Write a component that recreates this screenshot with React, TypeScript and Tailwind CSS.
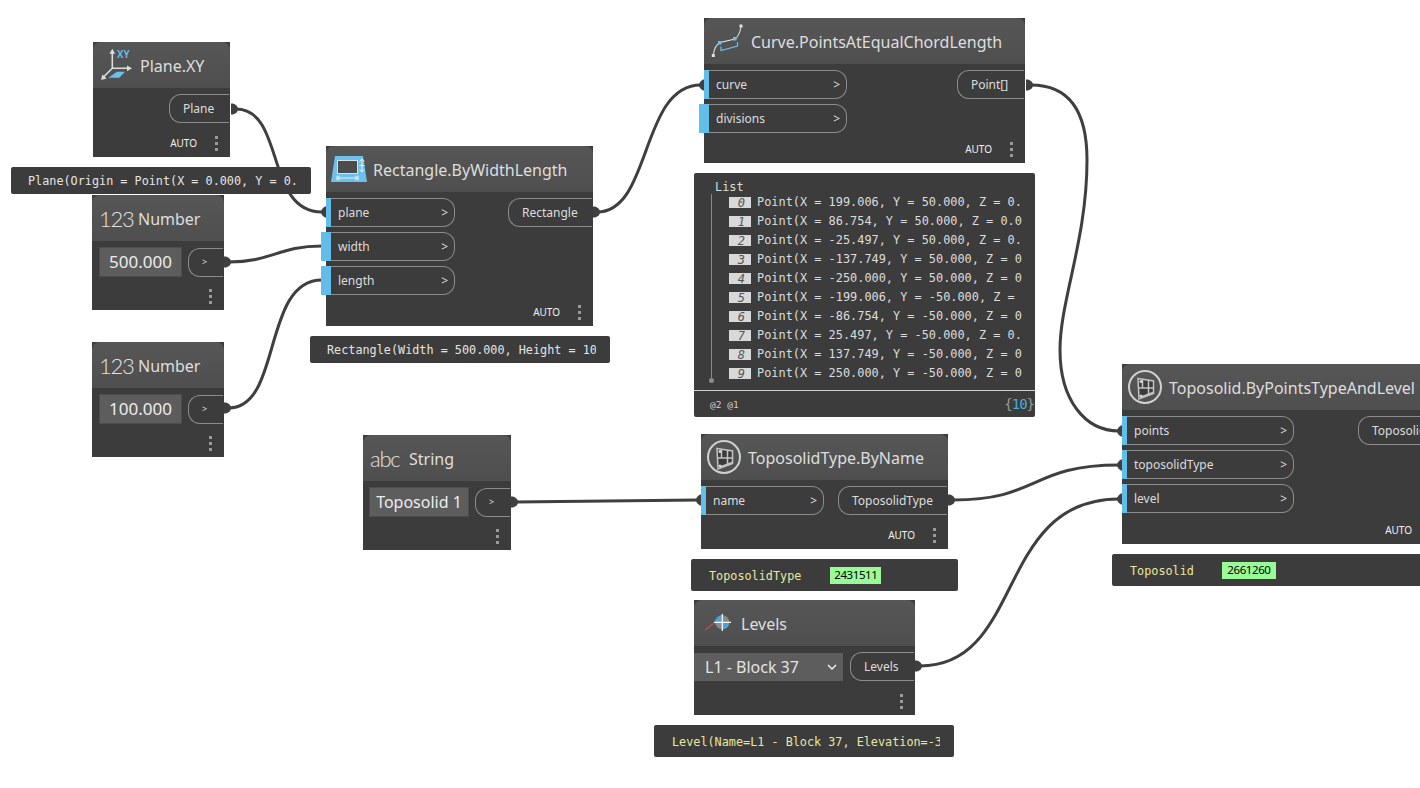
import { ReactNode } from "react";

const points = [
  "Point(X = 199.006, Y = 50.000, Z = 0.000)",
  "Point(X = 86.754, Y = 50.000, Z = 0.000)",
  "Point(X = -25.497, Y = 50.000, Z = 0.000)",
  "Point(X = -137.749, Y = 50.000, Z = 0.000)",
  "Point(X = -250.000, Y = 50.000, Z = 0.000)",
  "Point(X = -199.006, Y = -50.000, Z = 0.000)",
  "Point(X = -86.754, Y = -50.000, Z = 0.000)",
  "Point(X = 25.497, Y = -50.000, Z = 0.000)",
  "Point(X = 137.749, Y = -50.000, Z = 0.000)",
  "Point(X = 250.000, Y = -50.000, Z = 0.000)",
];

const outPlugs = [
  [231, 109],
  [593, 212],
  [1026, 85],
  [224, 262],
  [224, 408],
  [511, 502],
  [948, 500],
  [915, 666],
];

const inPlugs = [
  [326, 212],
  [704, 85],
  [701, 500],
  [1122, 431],
  [1122, 465],
  [1122, 499],
];

function InPort({ name, width, loose }: { name: string; width: string; loose?: boolean }) {
  return (
    <div className={`flex h-[29px] items-center ${width}`}>
      <div className={`h-full shrink-0 bg-[#62bde8] ${loose ? "-ml-[5px] w-[10px]" : "w-[5px]"}`} />
      <div className="flex h-full flex-1 items-center justify-between rounded-r-[12px] border border-l-0 border-[#8c8c8c] pl-[7px] pr-[6px] text-[12px] text-[#dcdcdc]">
        <span>{name}</span>
        <span>&gt;</span>
      </div>
    </div>
  );
}

function OutPort({ name, width }: { name: string; width: string }) {
  return (
    <div className={`flex h-[29px] items-center overflow-hidden rounded-l-[12px] border border-r-0 border-[#8c8c8c] pl-[13px] text-[12px] whitespace-nowrap text-[#dcdcdc] ${width}`}>
      {name}
    </div>
  );
}

function SmallOut({ name, width, pad }: { name: string; width: string; pad: string }) {
  return (
    <div className={`flex h-[29px] shrink-0 items-center rounded-l-[12px] border border-r-0 border-[#8c8c8c] text-[#dcdcdc] ${width} ${pad}`}>
      {name}
    </div>
  );
}

function Dots() {
  return (
    <div className="flex flex-col gap-[3px]">
      <div className="h-[3px] w-[3px] bg-[#9a9a9a]" />
      <div className="h-[3px] w-[3px] bg-[#9a9a9a]" />
      <div className="h-[3px] w-[3px] bg-[#9a9a9a]" />
    </div>
  );
}

function Footer({ auto = true }: { auto?: boolean }) {
  return (
    <div className="mt-auto flex h-[28px] items-center justify-end gap-[18px] pr-[12px]">
      {auto && <span className="text-[10px] text-[#f0f0f0]">AUTO</span>}
      <Dots />
    </div>
  );
}

function Header({ icon, title }: { icon: ReactNode; title: string }) {
  return (
    <div className="flex h-[46px] shrink-0 items-center rounded-t-[8px] bg-gradient-to-b from-[#565656] to-[#4f4f4f] pl-[4px]">
      <div className="h-[40px] w-[40px] shrink-0">{icon}</div>
      <span className="pt-[2px] pl-[3px] text-[16px] whitespace-nowrap text-[#dedede]">{title}</span>
    </div>
  );
}

function TextIconHeader({ mark, title }: { mark: string; title: string }) {
  return (
    <div className="flex h-[46px] shrink-0 items-center rounded-t-[8px] bg-gradient-to-b from-[#565656] to-[#4f4f4f] pl-[7px]">
      <span className="w-[39px] shrink-0 font-['Lato',sans-serif] text-[22px] font-light tracking-[-1.2px] text-[#e2e2e2]">{mark}</span>
      <span className="pt-[2px] text-[16px] text-[#dedede]">{title}</span>
    </div>
  );
}

function Preview({ className, children }: { className: string; children: ReactNode }) {
  return (
    <div className={`absolute flex items-center rounded-[2px] bg-[#3c3c3c] font-['DejaVu_Sans_Mono',monospace] text-[11.8px] whitespace-nowrap ${className}`}>
      {children}
    </div>
  );
}

function PlaneIcon() {
  return (
    <svg viewBox="0 0 40 40" className="h-full w-full" fill="none">
      <path d="M11.3 32.7 20 26.7H28L22.3 32.7Z" fill="#6cc0ec" />
      <path d="M15.3 23.3V7M15.3 23.3H31M15.3 23.3 6 32.5" stroke="#dcdcdc" strokeWidth="1.6" />
      <path d="M15.3 3.8 12.4 8.8H18.2ZM35 23.3 30 20.4V26.2ZM4 35 9.6 33.6 5.4 29.4Z" fill="#dcdcdc" />
      <text x="20" y="13" fill="#6cc0ec" fontSize="10" fontWeight="600" fontFamily="Noto Sans">XY</text>
    </svg>
  );
}

function RectIcon() {
  return (
    <svg viewBox="0 0 40 40" className="h-full w-full" fill="none">
      <path d="M5 7H33L37 33H1Z" fill="#6cc0ec" />
      <rect x="7.5" y="11.5" width="20" height="13" fill="#4c4c4c" stroke="#e0e0e0" />
      <path d="M32 10V23M29.5 12.5 32 10 34.5 12.5M29.5 20.5 32 23 34.5 20.5M29.5 16.5H34.5" stroke="#f0f0f0" />
      <path d="M7 29H28M7 26.5V31.5M28 26.5V31.5M10 27 7 29 10 31M25 27 28 29 25 31" stroke="#f0f0f0" />
    </svg>
  );
}

function CurveIcon() {
  return (
    <svg viewBox="0 0 40 40" className="h-full w-full" fill="none">
      <path d="M33 6C32 12 31 15 27 18" stroke="#d0d0d0" strokeWidth="1.2" />
      <path d="M27 18 12 21.5" stroke="#e8e8e8" strokeWidth="1.2" />
      <path d="M12 21.5C8 24 6 28 5.5 33" stroke="#d0d0d0" strokeWidth="1.2" />
      <path d="M13 25.5V29.5L29.5 25V21" stroke="#6cc0ec" strokeWidth="1.2" />
      <rect x="31.5" y="3.5" width="3" height="3" fill="#e0e0e0" />
      <rect x="25" y="16" width="3.5" height="3.5" fill="#6cc0ec" />
      <rect x="10" y="20" width="3.5" height="3.5" fill="#6cc0ec" />
      <rect x="3.8" y="33" width="3" height="3" fill="#e0e0e0" />
    </svg>
  );
}

function TopoIcon() {
  return (
    <svg viewBox="0 0 40 40" className="h-full w-full" fill="none">
      <circle cx="19" cy="20" r="16" stroke="#d0d0d0" strokeWidth="2" />
      <path d="M12 11.5 27.5 14V26.5L13 32Z" fill="#3a3a3a" stroke="#c4c4c4" strokeWidth="1.5" />
      <path d="M16.5 12V21M22.5 13V26.5M13 21H27M15 30 27 25.5" stroke="#c4c4c4" strokeWidth="1.5" />
      <circle cx="15" cy="14.5" r="1.5" fill="#d8d8d8" />
      <circle cx="15" cy="29" r="1.5" fill="#d8d8d8" />
    </svg>
  );
}

function LevelIcon() {
  return (
    <svg viewBox="0 0 40 40" className="h-full w-full" fill="none">
      <path d="M7 27 18 18.5" stroke="#b85050" strokeWidth="1.5" />
      <circle cx="24.3" cy="19.3" r="7" fill="#8a8a8a" />
      <path d="M24.3 19.3V12.3A7 7 0 0 0 17.3 19.3ZM24.3 19.3V26.3A7 7 0 0 0 31.3 19.3Z" fill="#4aa3e0" />
      <path d="M16 19.3H33M24.3 11V28" stroke="#ffffff" strokeWidth="1.2" />
    </svg>
  );
}

function Wires() {
  const stroke = "#3f3f3f";
  return (
    <svg className="absolute top-0 left-0 h-[788px] w-[1420px]" viewBox="0 0 1420 788" fill="none">
      <g stroke={stroke} strokeWidth="3">
        <path d="M236 109C285 109 265 212 322 212" />
        <path d="M229 262C272 262 278 246 322 246" />
        <path d="M229 408C282 408 262 280 322 280" />
        <path d="M597 212C652 212 640 85 701 85" />
        <path d="M1031 85C1075 85 1087 120 1087 160C1087 240 1060 300 1060 350C1060 400 1085 431 1119 431" />
        <path d="M515 502 698 500" />
        <path d="M953 500C1040 500 1030 465 1119 465" />
        <path d="M920 666C1025 666 995 499 1119 499" />
      </g>
      <g fill={stroke}>
        {outPlugs.map(([x, y]) => (
          <path key={`${x}-${y}`} d={`M${x} ${y - 5.5}H${x + 2}Q${x + 7} ${y - 4} ${x + 7} ${y}Q${x + 7} ${y + 4} ${x + 2} ${y + 5.5}H${x}Z`} />
        ))}
        {inPlugs.map(([x, y]) => (
          <path key={`${x}-${y}`} d={`M${x} ${y - 5.5}H${x - 1}Q${x - 5} ${y - 3} ${x - 5} ${y}Q${x - 5} ${y + 3} ${x - 1} ${y + 5.5}H${x}Z`} />
        ))}
      </g>
    </svg>
  );
}

export default function App() {
  return (
    <div className="relative h-[788px] w-[1420px] overflow-hidden bg-white font-['Noto_Sans',sans-serif]">
      <Wires />

      <div className="absolute top-[42px] left-[93px] flex h-[115px] w-[137px] flex-col bg-[#3c3c3c]">
        <Header icon={<PlaneIcon />} title="Plane.XY" />
        <div className="flex justify-end pt-[6px] pr-px">
          <OutPort name="Plane" width="w-[60px]" />
        </div>
        <Footer />
      </div>
      <Preview className="top-[167px] left-[11px] h-[27px] w-[300px] pt-[2px] pl-[17px] text-[#e4e4e4]">
        <div className="w-[270px] overflow-hidden">Plane(Origin = Point(X = 0.000, Y = 0.000, Z = 0.000))</div>
      </Preview>

      <div className="absolute top-[195px] left-[92px] flex h-[115px] w-[132px] flex-col bg-[#3c3c3c]">
        <TextIconHeader mark="123" title="Number" />
        <div className="flex items-center gap-[6px] pt-[6px] pl-[7px] pr-px">
          <div className="flex h-[30px] w-[83px] items-center justify-center border border-[#4d4d4d] bg-[#5d5d5d] text-[17px] text-[#ececec]">500.000</div>
          <SmallOut name=">" width="w-[35px]" pad="pl-[13px] text-[9px]" />
        </div>
        <Footer auto={false} />
      </div>

      <div className="absolute top-[342px] left-[92px] flex h-[115px] w-[132px] flex-col bg-[#3c3c3c]">
        <TextIconHeader mark="123" title="Number" />
        <div className="flex items-center gap-[6px] pt-[6px] pl-[7px] pr-px">
          <div className="flex h-[30px] w-[83px] items-center justify-center border border-[#4d4d4d] bg-[#5d5d5d] text-[17px] text-[#ececec]">100.000</div>
          <SmallOut name=">" width="w-[35px]" pad="pl-[13px] text-[9px]" />
        </div>
        <Footer auto={false} />
      </div>

      <div className="absolute top-[146px] left-[326px] flex h-[180px] w-[267px] flex-col bg-[#3c3c3c]">
        <Header icon={<RectIcon />} title="Rectangle.ByWidthLength" />
        <div className="flex justify-between pt-[6px] pr-px">
          <div className="flex flex-col gap-[5px]">
            <InPort name="plane" width="w-[129px]" />
            <InPort name="width" width="w-[129px]" loose />
            <InPort name="length" width="w-[129px]" loose />
          </div>
          <OutPort name="Rectangle" width="w-[84px]" />
        </div>
        <Footer />
      </div>
      <Preview className="top-[336px] left-[310px] h-[27px] w-[300px] pt-[2px] pl-[17px] text-[#e4e4e4]">
        <div className="w-[269px] overflow-hidden">Rectangle(Width = 500.000, Height = 100.000)</div>
      </Preview>

      <div className="absolute top-[18px] left-[704px] flex h-[145px] w-[321px] flex-col bg-[#3c3c3c]">
        <Header icon={<CurveIcon />} title="Curve.PointsAtEqualChordLength" />
        <div className="flex justify-between pt-[6px] pr-px">
          <div className="flex flex-col gap-[5px]">
            <InPort name="curve" width="w-[143px]" />
            <InPort name="divisions" width="w-[143px]" loose />
          </div>
          <OutPort name="Point[]" width="w-[67px]" />
        </div>
        <Footer />
      </div>

      <div className="absolute top-[173px] left-[694px] flex h-[244px] w-[341px] flex-col rounded-[2px] bg-[#3c3c3c] font-['DejaVu_Sans_Mono',monospace] text-[11.9px] text-[#dcdcdc]">
        <div className="h-[21px] pt-[6px] pl-[21px] leading-[16px]">List</div>
        <div className="relative ml-[17px] h-[187px] w-[311px] border-l border-[#8a8a8a] pl-[17px]">
          <div className="-mt-[1px]">
            {points.map((point, i) => (
              <div key={i} className="flex h-[19px] items-center gap-[6px]">
                <span className="flex h-[11px] w-[22px] shrink-0 items-center justify-end bg-[#d8d8d8] pr-[6px] text-[12px] text-[#555555] italic">{i}</span>
                <span className="w-[265px] overflow-hidden whitespace-nowrap">{point}</span>
              </div>
            ))}
          </div>
          <div className="absolute -bottom-[2px] -left-[3px] h-[5px] w-[5px] rounded-full bg-[#8a8a8a]" />
        </div>
        <div className="mt-[9px] flex h-[27px] flex-1 items-center justify-between border-t border-[#d0d0d0] pl-[16px] pr-px">
          <span className="pt-[2px] text-[9.5px] text-[#cccccc]">@2 @1</span>
          <span className="text-[14px] tracking-[-1px] text-[#9a9a9a]">
            {"{"}<span className="text-[#4fa8d8]">10</span>{"}"}
          </span>
        </div>
      </div>

      <div className="absolute top-[435px] left-[363px] flex h-[115px] w-[148px] flex-col bg-[#3c3c3c]">
        <TextIconHeader mark="abc" title="String" />
        <div className="flex items-center gap-[6px] pt-[6px] pl-[6px] pr-px">
          <div className="flex h-[30px] w-[100px] shrink-0 items-center justify-center border border-[#4d4d4d] bg-[#5d5d5d] text-[16px] whitespace-nowrap text-[#ececec]">Toposolid 1</div>
          <SmallOut name=">" width="w-[35px]" pad="pl-[13px] text-[9px]" />
        </div>
        <Footer auto={false} />
      </div>

      <div className="absolute top-[434px] left-[701px] flex h-[115px] w-[247px] flex-col bg-[#3c3c3c]">
        <Header icon={<TopoIcon />} title="ToposolidType.ByName" />
        <div className="flex justify-between pt-[6px] pr-px">
          <InPort name="name" width="w-[123px]" />
          <OutPort name="ToposolidType" width="w-[109px]" />
        </div>
        <Footer />
      </div>
      <Preview className="top-[559px] left-[691px] h-[32px] w-[267px] gap-[29px] pl-[18px] text-[#e8e8a0]">
        <span className="pt-[3px]">ToposolidType</span>
        <span className="flex h-[17px] w-[51px] items-center justify-center bg-[#98fb98] font-['Noto_Sans',sans-serif] text-[11.5px] tracking-[-0.4px] text-black">2431511</span>
      </Preview>

      <div className="absolute top-[600px] left-[694px] flex h-[115px] w-[221px] flex-col bg-[#3c3c3c]">
        <Header icon={<LevelIcon />} title="Levels" />
        <div className="flex items-center gap-[7px] pt-[6px] pr-px">
          <div className="flex h-[28px] w-[149px] shrink-0 items-center justify-between bg-[#5d5d5d] pr-[5px] pl-[11px] text-[16px] text-[#e4e4e4]">
            <span className="pt-[1px]">L1 - Block 37</span>
            <svg viewBox="0 0 12 12" className="h-[12px] w-[12px]" fill="none">
              <path d="M2 4 6 8 10 4" stroke="#f0f0f0" strokeWidth="1.5" />
            </svg>
          </div>
          <SmallOut name="Levels" width="w-[64px]" pad="pl-[13px] text-[12px]" />
        </div>
        <Footer auto={false} />
      </div>
      <Preview className="top-[725px] left-[654px] h-[32px] w-[300px] pt-[3px] pl-[18px] text-[#e8e8a0]">
        <div className="w-[268px] overflow-hidden">Level(Name=L1 - Block 37, Elevation=-3000.000)</div>
      </Preview>

      <div className="absolute top-[364px] left-[1122px] flex h-[180px] w-[323px] flex-col bg-[#3c3c3c]">
        <Header icon={<TopoIcon />} title="Toposolid.ByPointsTypeAndLevel" />
        <div className="flex justify-between pt-[6px] pr-px">
          <div className="flex flex-col gap-[5px]">
            <InPort name="points" width="w-[172px]" />
            <InPort name="toposolidType" width="w-[172px]" />
            <InPort name="level" width="w-[172px]" />
          </div>
          <OutPort name="Toposolid" width="w-[86px]" />
        </div>
        <Footer />
      </div>
      <Preview className="top-[554px] left-[1112px] h-[32px] w-[340px] gap-[28px] pl-[18px] text-[#e8e8a0]">
        <span className="pt-[3px]">Toposolid</span>
        <span className="flex h-[17px] w-[54px] items-center justify-center bg-[#98fb98] font-['Noto_Sans',sans-serif] text-[11.5px] tracking-[-0.4px] text-black">2661260</span>
      </Preview>
    </div>
  );
}
